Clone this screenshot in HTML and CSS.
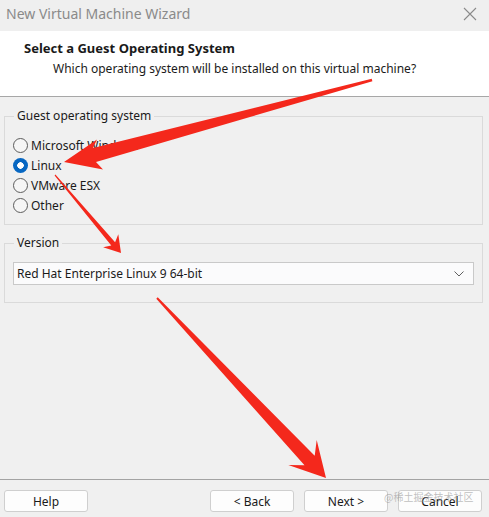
FILE: index.html
```html
<!DOCTYPE html>
<html lang="en">
<head>
<meta charset="utf-8">
<title>New Virtual Machine Wizard</title>
<link rel="stylesheet" href="styles.css">
</head>
<body>
<div class="window">
  <div class="titlebar">
    <span class="title">New Virtual Machine Wizard</span>
    <svg class="close" width="14" height="14" viewBox="0 0 14 14"><path d="M1 1L13 13M13 1L1 13" stroke="#8a8a8a" stroke-width="1.1" fill="none"/></svg>
  </div>
  <div class="header">
    <div class="heading">Select a Guest Operating System</div>
    <div class="subheading">Which operating system will be installed on this virtual machine?</div>
  </div>
  <div class="body">
    <fieldset class="group group-os">
      <legend>Guest operating system</legend>
      <div class="radio-row"><span class="radio"></span><span>Microsoft Windows</span></div>
      <div class="radio-row"><span class="radio checked"></span><span>Linux</span></div>
      <div class="radio-row"><span class="radio"></span><span>VMware ESX</span></div>
      <div class="radio-row"><span class="radio"></span><span>Other</span></div>
    </fieldset>
    <fieldset class="group group-version">
      <legend>Version</legend>
      <div class="select">
        <span>Red Hat Enterprise Linux 9 64-bit</span>
        <svg class="chevron" width="10" height="6" viewBox="0 0 10 6"><path d="M0.5 0.5L5 5L9.5 0.5" stroke="#606060" stroke-width="1" fill="none"/></svg>
      </div>
    </fieldset>
  </div>
  <div class="footer">
    <button class="btn">Help</button>
    <div class="spacer"></div>
    <button class="btn">&lt; Back</button>
    <button class="btn">Next &gt;</button>
    <button class="btn">Cancel</button>
  </div>
  <div class="watermark">@稀土掘金技术社区</div>
  <svg class="arrows" width="489" height="517" viewBox="0 0 489 517">
    <polygon fill="#f4281c" points="371.7,78.8 93,148 97,139.5 64,162 103,169.5 96,162 372.4,81.2"/>
    <polygon fill="#f4281c" points="54.6,175.4 111.3,245.4 103.1,247.3 121,253 118.3,234.3 115.1,242.2 55.4,174.6"/>
    <polygon fill="#f4281c" points="156.3,298.7 304.5,465.3 288.3,465 326,478 316.7,440 314.7,455.7 157.7,297.3"/>
  </svg>
</div>
</body>
</html>
```

FILE: styles.css
```css
* { box-sizing: border-box; }
html, body { margin: 0; padding: 0; }
body {
  width: 489px;
  height: 517px;
  overflow: hidden;
  font-family: "Noto Sans", "Open Sans", sans-serif;
  font-size: 12px;
  color: #1a1a1a;
  background: #f0f0f0;
}
.window {
  position: relative;
  width: 489px;
  height: 517px;
  display: flex;
  flex-direction: column;
}
.titlebar {
  height: 31px;
  flex: none;
  display: flex;
  align-items: center;
  justify-content: space-between;
  padding: 0 12px 4px 6px;
  background: #efefef;
}
.title {
  font-size: 14px;
  color: #8a8a8a;
}
.close { display: block; }
.header {
  height: 66px;
  flex: none;
  background: #ffffff;
  border-bottom: 1px solid #a7a7a7;
  padding: 8px 0 0 24px;
}
.heading {
  font-weight: bold;
  font-size: 13px;
  line-height: 18px;
}
.subheading {
  padding-left: 29px;
  line-height: 18px;
  margin-top: 3px;
}
.body {
  flex: 1;
  padding: 11px 6px 0 4px;
  display: flex;
  flex-direction: column;
}
.group {
  margin: 0;
  border: 1px solid #dadada;
  border-radius: 0;
  padding: 0 8px;
  min-width: 0;
}
.group legend {
  padding: 0 3px;
  margin-left: 1px;
  line-height: 16px;
}
.group-os { padding-top: 11px; padding-bottom: 9px; }
.radio-row {
  display: flex;
  align-items: center;
  gap: 3px;
  height: 20px;
}
.radio {
  width: 15px;
  height: 15px;
  border-radius: 50%;
  border: 1px solid #5c5c5c;
  background: #f6f6f6;
  flex: none;
}
.radio.checked {
  border: none;
  background: radial-gradient(circle, #ffffff 0 3px, #0767c2 3.5px);
}
.group-version {
  margin-top: 10px;
  padding-top: 11px;
  padding-bottom: 17px;
}
.select {
  height: 23px;
  margin-right: 0;
  border: 1px solid #c9c9c9;
  background: #fbfbfc;
  display: flex;
  align-items: center;
  justify-content: space-between;
  padding: 0 9px 0 3px;
}
.chevron { display: block; }
.footer {
  height: 38px;
  flex: none;
  border-top: 1px solid #a3a3a3;
  display: flex;
  align-items: flex-start;
  padding: 10px 7px 0 4px;
  gap: 10px;
}
.spacer { flex: 1; }
.btn {
  width: 84px;
  height: 22px;
  padding: 0;
  font: inherit;
  color: #1a1a1a;
  background: #fdfdfd;
  border: 1px solid #cfcfcf;
  border-radius: 3px;
}
.watermark {
  position: absolute;
  left: 384px;
  top: 490px;
  white-space: nowrap;
  font-family: "Noto Sans CJK SC", sans-serif;
  font-size: 10px;
  line-height: 14px;
  color: rgba(150, 150, 150, 0.6);
}
.arrows {
  position: absolute;
  left: 0;
  top: 0;
  pointer-events: none;
}
```
